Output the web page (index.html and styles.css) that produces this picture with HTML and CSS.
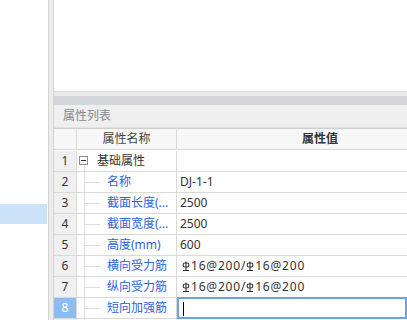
FILE: index.html
```html
<!DOCTYPE html>
<html lang="zh-cn">
<head>
    <meta charset="UTF-8">
    <title>属性列表</title>
    <link rel="stylesheet" href="styles.css">
</head>
<body>

<div class="app">
    <!-- 左侧构件列表 -->
    <div class="side">
        <div class="side-item selected"></div>
    </div>
    <div class="splitter"></div>

    <div class="main">
        <div class="preview"></div>
        <div class="panel-gap"></div>
        <div class="panel-bar"></div>
        <div class="panel-title">属性列表</div>

        <!-- 属性表格 -->
        <div class="grid">
            <div class="row head">
                <div class="cell num"></div>
                <div class="cell name">属性名称</div>
                <div class="cell value">属性值</div>
            </div>
            <div class="row">
                <div class="cell num">1</div>
                <div class="cell name group"><span class="toggle"></span>基础属性</div>
                <div class="cell value"></div>
            </div>
            <div class="row">
                <div class="cell num">2</div>
                <div class="cell name child">名称</div>
                <div class="cell value">DJ-1-1</div>
            </div>
            <div class="row">
                <div class="cell num">3</div>
                <div class="cell name child">截面长度(...</div>
                <div class="cell value">2500</div>
            </div>
            <div class="row">
                <div class="cell num">4</div>
                <div class="cell name child">截面宽度(...</div>
                <div class="cell value">2500</div>
            </div>
            <div class="row">
                <div class="cell num">5</div>
                <div class="cell name child">高度(mm)</div>
                <div class="cell value">600</div>
            </div>
            <div class="row">
                <div class="cell num">6</div>
                <div class="cell name child">横向受力筋</div>
                <div class="cell value rebar"><svg class="bar" viewBox="0 0 8 10"><path d="M4 0.5V9.5M1 9.5H7" stroke="#333" stroke-width="1.1" fill="none"/><rect x="1.2" y="2" width="5.6" height="4" rx="1.8" stroke="#333" stroke-width="1.1" fill="none"/></svg>16@200/<svg class="bar" viewBox="0 0 8 10"><path d="M4 0.5V9.5M1 9.5H7" stroke="#333" stroke-width="1.1" fill="none"/><rect x="1.2" y="2" width="5.6" height="4" rx="1.8" stroke="#333" stroke-width="1.1" fill="none"/></svg>16@200</div>
            </div>
            <div class="row">
                <div class="cell num">7</div>
                <div class="cell name child">纵向受力筋</div>
                <div class="cell value rebar"><svg class="bar" viewBox="0 0 8 10"><path d="M4 0.5V9.5M1 9.5H7" stroke="#333" stroke-width="1.1" fill="none"/><rect x="1.2" y="2" width="5.6" height="4" rx="1.8" stroke="#333" stroke-width="1.1" fill="none"/></svg>16@200/<svg class="bar" viewBox="0 0 8 10"><path d="M4 0.5V9.5M1 9.5H7" stroke="#333" stroke-width="1.1" fill="none"/><rect x="1.2" y="2" width="5.6" height="4" rx="1.8" stroke="#333" stroke-width="1.1" fill="none"/></svg>16@200</div>
            </div>
            <div class="row current">
                <div class="cell num">8</div>
                <div class="cell name child">短向加强筋</div>
                <div class="cell value editing"><span class="caret"></span></div>
            </div>
            <div class="row">
                <div class="cell num"></div>
                <div class="cell name child"></div>
                <div class="cell value"></div>
            </div>
        </div>
    </div>
</div>

</body>
</html>
```

FILE: styles.css
```css
body {
    margin: 0;
    width: 407px;
    height: 320px;
    overflow: hidden;
    font-family: "Noto Sans", "Noto Sans CJK SC", sans-serif;
    font-size: 12px;
    color: #333;
    background-color: #fff;
}
.app {
    display: flex;
    height: 320px;
}
.side {
    width: 48px;
    flex: none;
    padding-top: 204px;
    background-color: #fff;
}
.side-item {
    height: 20px;
    width: 47px;
}
.side-item.selected {
    background-color: #cce2f8;
}
.splitter {
    width: 4px;
    flex: none;
    border-left: 1px solid #d2d2d2;
    background-color: #ececec;
}
.main {
    flex: 1;
    min-width: 0;
    height: 320px;
    overflow: hidden;
    border-left: 1px solid #d4d4d4;
    display: flex;
    flex-direction: column;
}
.preview {
    height: 91px;
    flex: none;
    background-color: #fff;
}
.panel-gap {
    height: 4px;
    flex: none;
    border-top: 1px solid #d9d9d9;
    background-color: #ececec;
}
.panel-bar {
    height: 9px;
    flex: none;
    background-color: #d5d6db;
}
.panel-title {
    height: 22px;
    flex: none;
    line-height: 22px;
    padding-left: 9px;
    color: #888;
    background-color: #efefef;
    border-bottom: 1px solid #e2e2e2;
}
.grid {
    flex: none;
}
.row {
    display: grid;
    grid-template-columns: 23px 100px 1fr;
    height: 21px;
}
.cell {
    box-sizing: border-box;
    height: 21px;
    line-height: 20px;
    border-right: 1px solid #d9d9d9;
    border-bottom: 1px solid #d9d9d9;
    white-space: nowrap;
    overflow: hidden;
    position: relative;
}
.row.head {
    height: 22px;
    border-top: 1px solid #cfcfcf;
}
.row.head .cell {
    height: 21px;
    background-color: #f7f7f7;
    color: #444;
}
.row.head .name {
    text-align: center;
}
.row.head .value {
    padding-left: 125px;
    font-weight: bold;
    color: #333;
}
.num {
    text-align: center;
    background-color: #f0f0f0;
    color: #333;
}
.row.current .num {
    background-color: #8cbcf0;
    color: #fff;
}
.value {
    padding-left: 3px;
    border-right: none;
}
.rebar {
    padding-left: 5px;
    letter-spacing: 0.8px;
}
.bar {
    width: 8px;
    height: 10px;
    margin-right: 1px;
    vertical-align: -1px;
}
.group {
    padding-left: 20px;
}
.toggle {
    position: absolute;
    left: 2px;
    top: 5px;
    width: 9px;
    height: 9px;
    box-sizing: border-box;
    border: 1px solid #8c8c8c;
    background-color: #fff;
}
.toggle::after {
    content: "";
    position: absolute;
    left: 1px;
    top: 3px;
    width: 5px;
    height: 1px;
    background-color: #333;
}
.child {
    padding-left: 30px;
    color: #2d65da;
}
.child::before {
    content: "";
    position: absolute;
    left: 7px;
    top: 0;
    bottom: -1px;
    width: 1px;
    background-color: #dcdcdc;
}
.child::after {
    content: "";
    position: absolute;
    left: 8px;
    top: 10px;
    width: 15px;
    height: 1px;
    background-color: #dcdcdc;
}
.group::after {
    content: "";
    position: absolute;
    left: 7px;
    top: 14px;
    bottom: -1px;
    width: 1px;
    background-color: #dcdcdc;
}
.editing {
    border: 2px solid #6aa3df;
    margin-top: -1px;
    height: 22px;
}
.caret {
    position: absolute;
    left: 4px;
    top: 3px;
    width: 1px;
    height: 14px;
    background-color: #000;
}
```
